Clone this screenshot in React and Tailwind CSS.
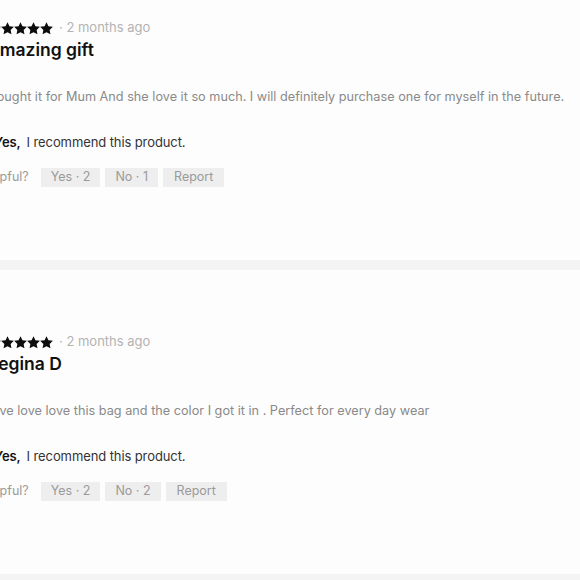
import React from "react";

function Star() {
  return (
    <svg width="13" height="13" viewBox="0 0 24 24" className="shrink-0">
      <path d="M12 0.4l3.6 7.4 8.2 1.1-6 5.7 1.5 8.1L12 18.8l-7.3 3.9 1.5-8.1-6-5.7 8.2-1.1z" fill="#0d0d0d" />
    </svg>
  );
}

function Review({ title, body, no }) {
  return (
    <div className="pt-[62px] pb-[73px]">
      <div className="flex items-center h-5 -ml-[12px]">
        <div className="flex">
          <Star /><Star /><Star /><Star /><Star />
        </div>
        <span className="ml-[6px] text-[13px] text-[#b3b3b3]">· 2 months ago</span>
      </div>
      <div className="-ml-[13px] text-[17.5px] leading-6 font-semibold text-[#111]">{title}</div>
      <p className="-ml-[18px] mt-6 text-[12.7px] leading-[22px] text-[#8a8a8a] whitespace-nowrap">{body}</p>
      <p className="-ml-[6px] mt-[23px] text-[13px] tracking-[-0.1px] leading-[22px] text-[#333] whitespace-nowrap">
        <span className="font-semibold text-[#111]">Yes,</span>
        <span className="ml-[6px]">I recommend this product.</span>
      </p>
      <div className="-ml-[20px] mt-[15px] flex items-center gap-[5px] text-[12.5px] text-[#9a9a9a]">
        <span className="mr-[7px]">Helpful?</span>
        <span className="h-[19px] px-[10px] bg-[#eeeeee] flex items-center">Yes · 2</span>
        <span className="h-[19px] px-[10px] bg-[#eeeeee] flex items-center">{no}</span>
        <span className="h-[19px] px-[11px] bg-[#eeeeee] flex items-center">Report</span>
      </div>
    </div>
  );
}

export default function App() {
  return (
    <div className="w-[580px] h-[580px] overflow-hidden bg-[#fdfdfd]" style={{ fontFamily: "Inter, sans-serif" }}>
      <div className="-mt-[44px]">
        <Review
          title="Amazing gift"
          body="I bought it for Mum And she love it so much. I will definitely purchase one for myself in the future."
          no="No · 1"
        />
        <div className="h-[10px] bg-[#f4f4f4]" />
        <Review
          title="Regina D"
          body="I love love love this bag and the color I got it in . Perfect for every day wear"
          no="No · 2"
        />
        <div className="h-[10px] bg-[#f4f4f4]" />
      </div>
    </div>
  );
}
